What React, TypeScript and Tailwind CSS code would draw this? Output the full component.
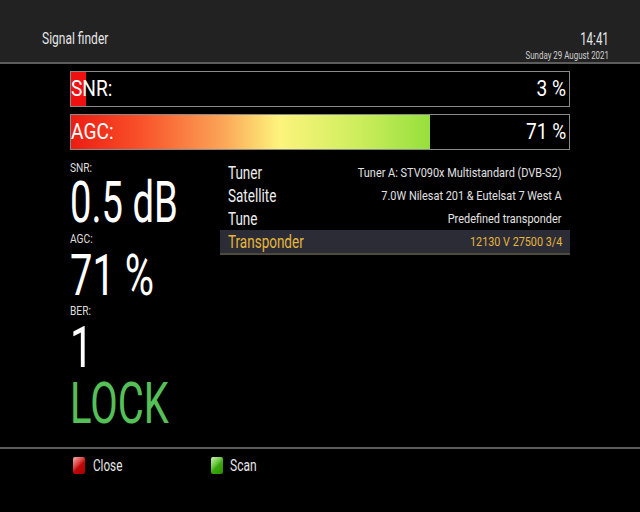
const ROWS = [
  { label: 'Tuner', value: 'Tuner A: STV090x Multistandard (DVB-S2)' },
  { label: 'Satellite', value: '7.0W Nilesat 201 & Eutelsat 7 West A' },
  { label: 'Tune', value: 'Predefined transponder' },
];

// Roboto squeezed sideways to stand in for the receiver's condensed skin font
function Narrow({ className, children }: { className: string; children: React.ReactNode }) {
  return <span className={`inline-block whitespace-nowrap ${className}`}>{children}</span>;
}

function Bar({ label, value, pct, gradient }: { label: string; value: string; pct: number; gradient?: boolean }) {
  return (
    <div className="relative h-[36px] border border-[#8a8a8a] bg-black">
      <div
        className={
          gradient
            ? 'absolute inset-y-0 left-0 bg-[linear-gradient(90deg,#ec1c12_0%,#f9532b_20%,#fba456_42%,#fdf47c_58%,#cdee5c_80%,#96df3c_100%)]'
            : 'absolute inset-y-0 left-0 bg-[#f01010]'
        }
        style={{ width: `${pct}%` }}
      />
      <div className="relative flex h-full items-center justify-between pr-[3px] text-[22px] leading-none text-white">
        <Narrow className="origin-left [transform:scaleX(0.87)]">{label}</Narrow>
        <Narrow className="origin-right [transform:scaleX(0.87)]">{value}</Narrow>
      </div>
    </div>
  );
}

export default function App() {
  return (
    <div className="relative h-[512px] w-[640px] overflow-hidden bg-black font-['Roboto',sans-serif] text-white">
      <div className="flex h-[64px] items-end justify-between border-b-2 border-[#5c5c5c] bg-[#222222] pl-[42px] pr-[31px]">
        <div className="mb-[15px] text-[16px] leading-[16px] text-[#e6e6e6]">
          <Narrow className="origin-left [transform:scaleX(0.75)]">Signal finder</Narrow>
        </div>
        <div className="flex flex-col items-end">
          <div className="text-[18px] leading-[18px] text-[#e6e6e6]">
            <Narrow className="origin-right [transform:scaleX(0.64)]">14:41</Narrow>
          </div>
          <div className="mt-[1px] text-[11px] leading-[13px] text-[#d0d0d0]">
            <Narrow className="origin-right [transform:scaleX(0.72)]">Sunday 29 August 2021</Narrow>
          </div>
        </div>
      </div>

      <div className="mx-[70px] mt-[7px] flex flex-col gap-[7px]">
        <Bar label="SNR:" value="3 %" pct={3} />
        <Bar label="AGC:" value="71 %" pct={72} gradient />
      </div>

      <div className="mx-[70px] mt-[12px] flex">
        <div className="flex w-[150px] flex-col">
          <div className="h-[12px] text-[12px] leading-[12px] text-[#dddddd]">
            <Narrow className="origin-left [transform:scaleX(0.85)]">SNR:</Narrow>
          </div>
          <div className="mt-[1px] h-[56px] text-[57px] leading-[56px]">
            <Narrow className="origin-left [transform:scaleX(0.67)]">0.5 dB</Narrow>
          </div>
          <div className="mt-[2px] h-[12px] text-[12px] leading-[12px] text-[#dddddd]">
            <Narrow className="origin-left [transform:scaleX(0.85)]">AGC:</Narrow>
          </div>
          <div className="mt-[3px] h-[56px] text-[57px] leading-[56px]">
            <Narrow className="origin-left [transform:scaleX(0.7)]">71 %</Narrow>
          </div>
          <div className="mt-[1px] h-[12px] text-[12px] leading-[12px] text-[#dddddd]">
            <Narrow className="origin-left [transform:scaleX(0.85)]">BER:</Narrow>
          </div>
          <div className="mt-[3px] h-[56px] text-[57px] leading-[56px]">
            <Narrow className="origin-left [transform:scaleX(0.72)]">1</Narrow>
          </div>
          <div className="h-[56px] text-[57px] leading-[56px] text-[#55c057]">
            <Narrow className="origin-left [transform:scaleX(0.7)]">LOCK</Narrow>
          </div>
        </div>

        <div className="-mt-[1px] flex flex-1 flex-col">
          {ROWS.map((r) => (
            <div key={r.label} className="flex h-[23px] items-center justify-between px-[8px]">
              <span className="text-[18px] text-[#eeeeee]">
                <Narrow className="origin-left [transform:scaleX(0.75)]">{r.label}</Narrow>
              </span>
              <span className="text-[13.5px] text-[#e2e2e2]">
                <Narrow className="origin-right [transform:scaleX(0.81)]">{r.value}</Narrow>
              </span>
            </div>
          ))}
          <div className="flex h-[25px] items-center justify-between border-b-2 border-[#4e4b3c] bg-[#2c2c37] px-[8px]">
            <span className="text-[18px] text-[#e6b63a]">
              <Narrow className="origin-left [transform:scaleX(0.75)]">Transponder</Narrow>
            </span>
            <span className="text-[13.5px] text-[#e6b63a]">
              <Narrow className="origin-right [transform:scaleX(0.8)]">12130 V 27500 3/4</Narrow>
            </span>
          </div>
        </div>
      </div>

      <div className="absolute inset-x-0 bottom-0 h-[65px] border-t-2 border-[#5c5c5c]">
        <div className="flex items-center pl-[73px] pt-[8px]">
          <div className="flex w-[138px] items-center gap-[8px]">
            <span className="h-[17px] w-[12px] rounded-[2px] bg-[linear-gradient(135deg,#f2b4b4_0%,#de4040_40%,#c00808_55%,#a80000_100%)]" />
            <span className="text-[16px] leading-[17px] text-[#e6e6e6]">
              <Narrow className="origin-left [transform:scaleX(0.73)]">Close</Narrow>
            </span>
          </div>
          <div className="flex items-center gap-[7px]">
            <span className="h-[17px] w-[12px] rounded-[2px] bg-[linear-gradient(135deg,#d2f2bc_0%,#6cc840_40%,#3aa810_55%,#2a9000_100%)]" />
            <span className="text-[16px] leading-[17px] text-[#e6e6e6]">
              <Narrow className="origin-left [transform:scaleX(0.75)]">Scan</Narrow>
            </span>
          </div>
        </div>
      </div>
    </div>
  );
}
